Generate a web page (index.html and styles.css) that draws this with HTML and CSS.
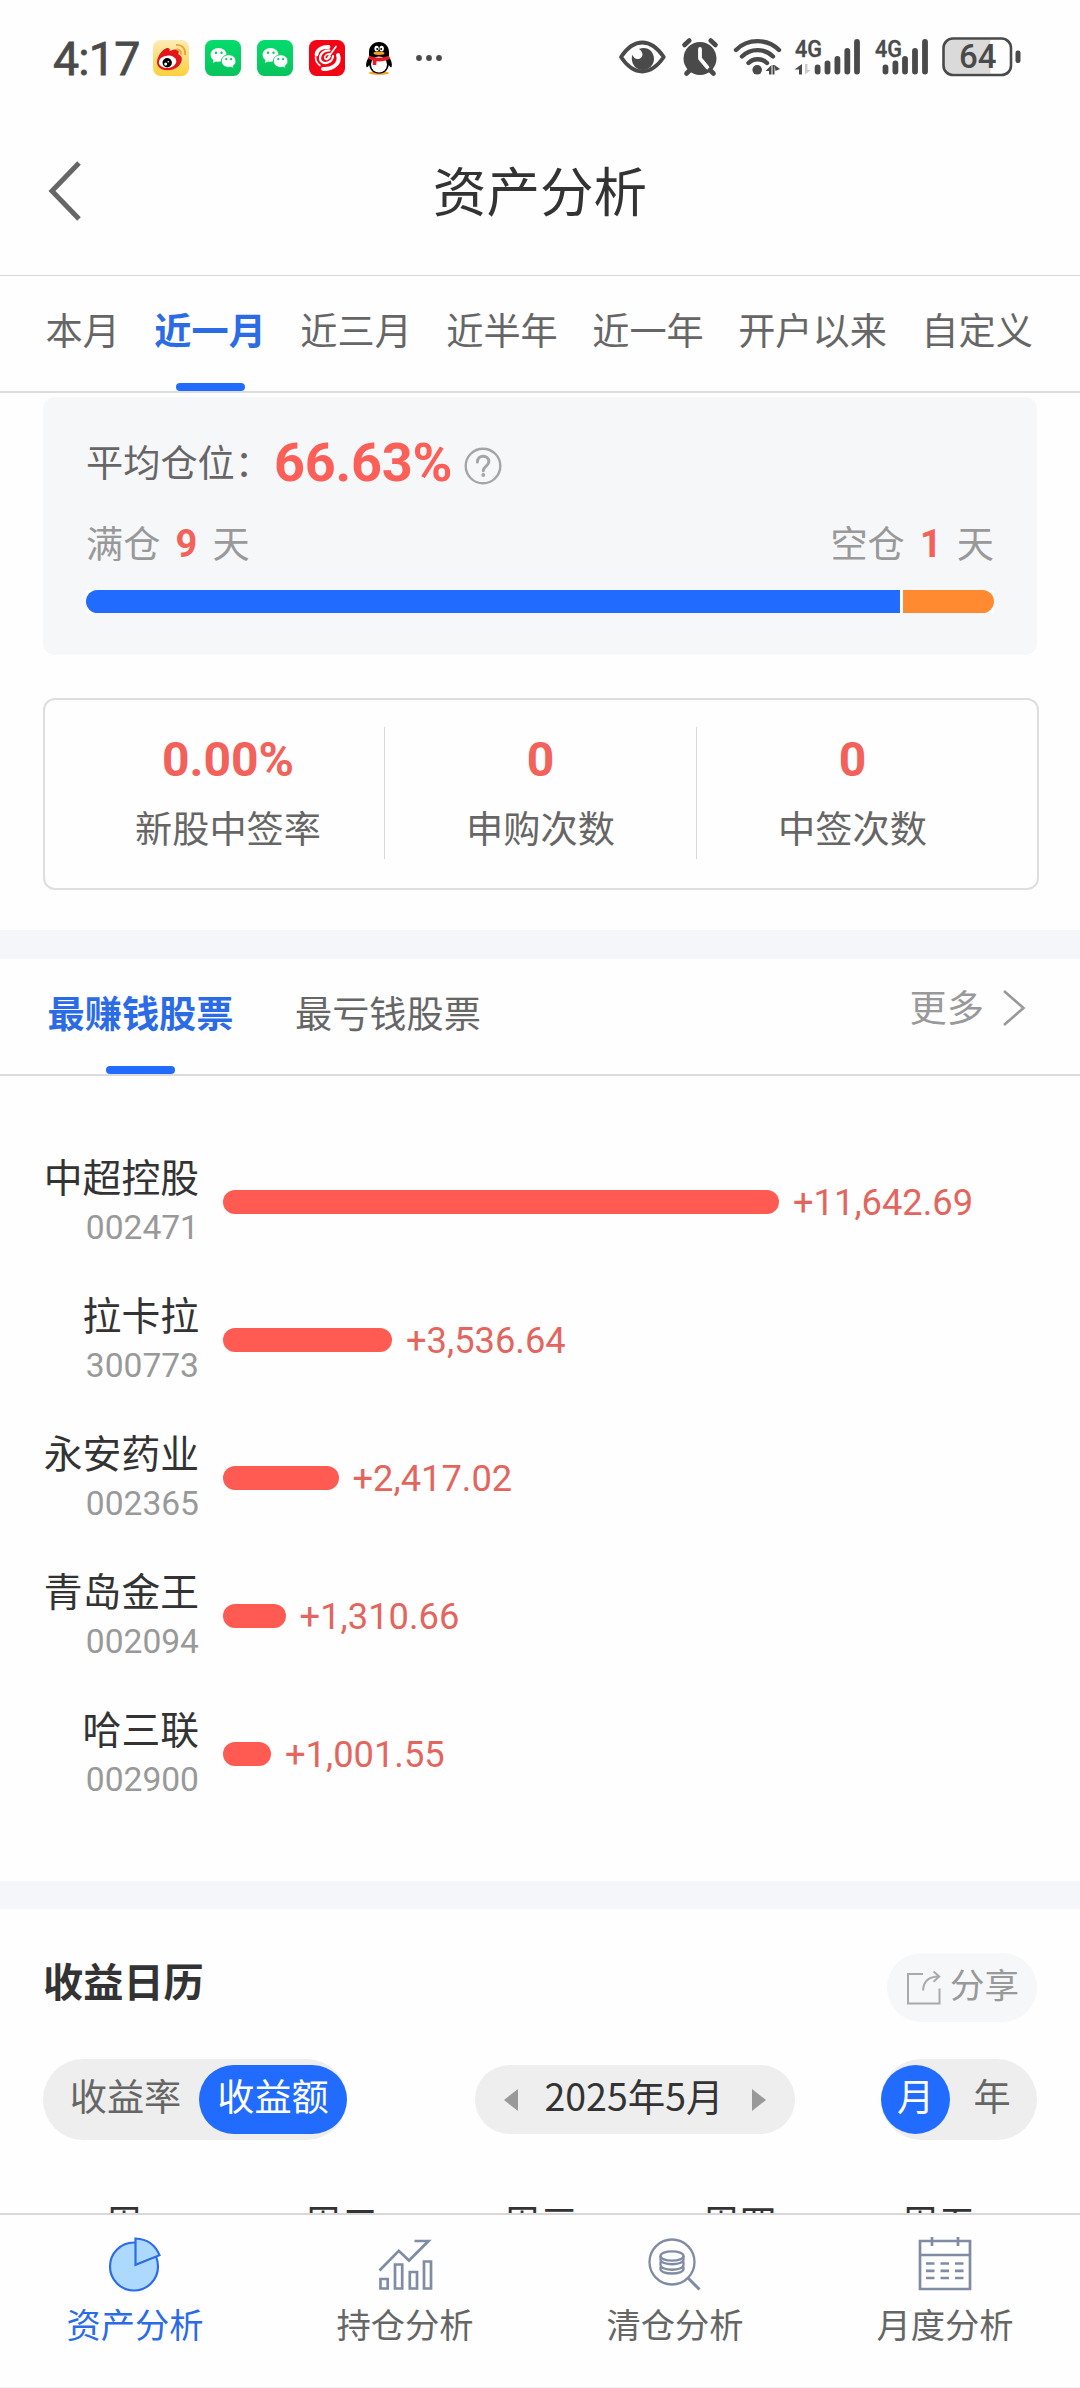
FILE: index.html
```html
<!DOCTYPE html>
<html lang="zh-CN">
<head>
<meta charset="utf-8">
<title>资产分析</title>
<link rel="stylesheet" href="styles.css">
</head>
<body>
<svg class="defs" width="0" height="0">
  <defs>
    <linearGradient id="weibo-bg" x1="0" y1="0" x2="0" y2="1"><stop offset="0" stop-color="#fdebb8"/><stop offset="1" stop-color="#fdd03c"/></linearGradient>
    <linearGradient id="wechat-bg" x1="0" y1="0" x2="0" y2="1"><stop offset="0" stop-color="#04dc6c"/><stop offset="1" stop-color="#09c35c"/></linearGradient>
    <symbol id="wechat" viewBox="0 0 36 36">
      <rect width="36" height="36" rx="7.500" fill="url(#wechat-bg)"/>
      <path d="M13.600 8C9 8 5.600 11 5.600 14.800c0 2.200 1.100 4 2.900 5.200L7.900 23l3.100-1.600c.8.200 1.700.3 2.600.3 4.600 0 7.900-3.200 7.900-6.900C21.500 11 18.200 8 13.600 8z" fill="#fff"/>
      <path d="M23.700 14.800c-4.200 0-7.300 2.800-7.300 6.300s3.100 6.300 7.300 6.300c.8 0 1.500-.1 2.200-.3l2.700 1.400-.5-2.400c1.700-1.100 2.800-2.900 2.800-5C30.900 17.600 27.900 14.800 23.700 14.800z" fill="#fff" stroke="#08cc62" stroke-width=".9"/>
      <g fill="#08cc62"><circle cx="11" cy="12.800" r="1.200"/><circle cx="16.500" cy="12.800" r="1.200"/><circle cx="21.300" cy="19.200" r="1.100"/><circle cx="26.100" cy="19.200" r="1.100"/></g>
    </symbol>
  </defs>
</svg>
<div class="screen">
  <header class="status">
    <div class="status-left">
      <span class="clock">4:17</span>
      <svg width="36" height="36" viewBox="0 0 36 36">
        <rect width="36" height="36" rx="7.500" fill="url(#weibo-bg)"/>
        <path d="M14 8c2.500-.5 3.200 1.200 2.600 3.200 3.400-1.600 6.200-2.400 8.200-1 1.400 1 .9 2.600.5 4 2 .8 3.700 2.500 3.500 5.200-.4 6-7 10.800-14.300 10.800C8.500 30.200 4 27 4 22.200 4 16.500 9.500 9 14 8z" fill="#e1151b"/>
        <ellipse cx="14.600" cy="21.800" rx="8.800" ry="6.200" fill="#fff" transform="rotate(-6 14.600 21.800)"/>
        <circle cx="14.200" cy="22.800" r="4.700"/><circle cx="12.700" cy="24" r="1.500" fill="#fff"/><circle cx="15.300" cy="21.800" r=".8" fill="#fff"/>
        <path d="M23 5c6-.7 10 4 9 10M23.500 9.500c3-.2 5 1.700 4.500 5" fill="none" stroke="#f0a430" stroke-width="1.900"/>
      </svg>
      <svg width="36" height="36"><use href="#wechat"/></svg>
      <svg width="36" height="36"><use href="#wechat"/></svg>
      <svg width="36" height="36" viewBox="0 0 36 36">
        <rect width="36" height="36" rx="7.500" fill="#f40516"/>
        <g fill="none" stroke="#fff" stroke-linecap="round">
          <path d="M7.500 14.500C8 9.500 13 6.800 19.500 7" stroke-width="3.800"/>
          <path d="M6.500 17c0 4 1.500 6.500 4.500 8.500" stroke-width="1.600"/>
          <path d="M29 15c1.500 4 .5 8-3.500 11-3 2.300-7 3.300-11.500 3" stroke-width="4"/>
          <path d="M20.500 10.500c-5-.5-9.500 3-9.500 7.500 0 4 3.800 6 8 4.500 3-1 5-4 5-6.500" stroke-width="2.200"/>
          <path d="M27 6.500 18 19M20.500 13.800c-3 0-5.500 2.400-4.700 4.400.8 2 4 1 5.200-1.700" stroke-width="1.700"/>
        </g>
      </svg>
      <svg width="36" height="36" viewBox="0 0 36 36">
        <ellipse cx="18" cy="33" rx="10" ry="1.700" fill="#f5a51c"/>
        <path d="M18 2c-6 0-10 4.500-10 10v5c-2 3-3.600 6.500-2.600 10 .8 1 2-.5 2.800-2C9 31 13 33.500 18 33.500S27 31 27.800 25c.8 1.500 2 3 2.800 2 1-3.500-.6-7-2.600-10v-5C28 6.500 24 2 18 2z"/>
        <ellipse cx="18" cy="24.500" rx="8" ry="8" fill="#fff"/>
        <path d="M8 15.500c6 3 14 3 20 0l.8 3.300c-4 2.200-9 3-13.300 2.500L15.300 25H11.800v-4.600L7.300 18.800z" fill="#e81a26"/>
        <ellipse cx="15.600" cy="8.600" rx="2.200" ry="2.900" fill="#fff"/><ellipse cx="20.700" cy="8.600" rx="2.200" ry="2.900" fill="#fff"/><circle cx="16.200" cy="9" r="1"/><circle cx="20.200" cy="9" r="1"/>
        <ellipse cx="18" cy="13.300" rx="5.500" ry="1.700" fill="#f5a51c"/>
      </svg>
      <svg class="dots" width="26" height="8" viewBox="0 0 26 8" fill="#4a4a4a"><circle cx="3" cy="4" r="2.900"/><circle cx="13" cy="4" r="2.900"/><circle cx="23" cy="4" r="2.900"/></svg>
    </div>
    <svg class="status-right" width="404" height="42" viewBox="0 0 404 42" fill="#4a4a4a">
      <path d="M3 22C9 13 16 7.500 24.300 7.500S39.600 13 45.800 22C39.600 31 32.600 36.500 24.300 36.500S9 31 3 22z" fill="none" stroke="#4a4a4a" stroke-width="3.800" stroke-linejoin="round"/>
      <path d="M21 14c8-3 15 2 15 10 0 6-5.200 11-11.200 11S14.200 30.500 13.800 24c-.1-1.500.2-3 .7-4.200 1 3.500 4 5 7 4 4-1.300 4.200-7-.5-9.800z"/>
      <g>
        <circle cx="82" cy="23.500" r="16.500"/>
        <path d="M82 14v9.500l7.500 9" fill="none" stroke="#fff" stroke-width="3.800" stroke-linecap="round" stroke-linejoin="round"/>
        <path d="M66.500 10l4.800-4.500M97.500 10l-4.800-4.500M72 35l-3.500 3.500M92 35l3.500 3.500" stroke="#4a4a4a" stroke-width="4.600" stroke-linecap="round"/>
      </g>
      <g fill="none" stroke="#4a4a4a" stroke-width="4.400" stroke-linecap="round">
        <path d="M118 15c11.500-11.800 31.500-11.800 43 0M124 21.500c8.500-8.500 22.500-8.500 31 0M130.500 28c5-5 13.500-5 18.500 0"/>
      </g>
      <circle cx="139.200" cy="34.800" r="4.800"/><path d="M153.500 30v9.500H151v-3.500h-3.500zM156.500 30v9.500h-2V30zl5.500 4-4.500 2z"/>
      <text x="177" y="21.500" class="net" textLength="27" lengthAdjust="spacingAndGlyphs">4G</text>
      <path d="M184 29v10.500h-3v-5h-4.500z"/><path d="M187 29h2.500v6h3.500l-6 4.500z" fill="#ccc"/>
      <g stroke="#4a4a4a" stroke-width="5.800" stroke-linecap="round"><path d="M199.600 32.500v4M209.500 28.500v8M219.400 24v12.500M229.300 16v20.500M239 7v29.500M267.500 32.500v4M277.400 28.500v8M287 24v12.500M297 16v20.500M307 7v29.500"/></g>
      <text x="257" y="21.500" class="net" textLength="27" lengthAdjust="spacingAndGlyphs">4G</text>
      <path d="M335 4.500h37.500v34H335c-6 0-9-3-9-9v-16c0-6 3-9 9-9z" fill="#dadada"/>
      <rect x="325.500" y="3.500" width="67.500" height="36.500" rx="9.500" fill="none" stroke="#4a4a4a" stroke-width="2.600"/>
      <rect x="397.500" y="15.500" width="5" height="12.500" rx="2.200"/>
      <text x="341" y="33.200" class="battery" textLength="37.500" lengthAdjust="spacingAndGlyphs">64</text>
    </svg>
  </header>

  <div class="title-bar">
    <svg width="36" height="62" viewBox="0 0 36 62"><path d="M33 3 6 31l27 28" fill="none" stroke="#666" stroke-width="5"/></svg>
    <h1>资产分析</h1>
  </div>

  <nav class="tabs">
    <span>本月</span><span class="on">近一月</span><span>近三月</span><span>近半年</span><span>近一年</span><span>开户以来</span><span>自定义</span>
  </nav>

  <main class="content">
    <section class="position">
      <div class="avg"><span>平均仓位：</span><b class="num">66.63%</b>
        <svg width="38" height="38" viewBox="0 0 38 38" fill="none" stroke="#a4a5a6" stroke-width="2.400"><circle cx="19" cy="19" r="17.300"/><path d="M13.400 15c0-7.600 11.500-7.600 11.500-.4 0 4.600-5.600 4.500-5.600 9.200" stroke-width="3" stroke-linecap="round"/><circle cx="19.300" cy="28" r="1.900" fill="#a4a5a6" stroke="none"/></svg>
      </div>
      <div class="days"><p>满仓<b class="num">9</b>天</p><p>空仓<b class="num">1</b>天</p></div>
      <div class="split"><i class="full"></i><i class="empty"></i></div>
    </section>

    <section class="stats">
      <div><b class="num">0.00%</b><span>新股中签率</span></div>
      <div><b class="num">0</b><span>申购次数</span></div>
      <div><b class="num">0</b><span>中签次数</span></div>
    </section>

    <div class="band"></div>

    <div class="rank-tabs">
      <span class="on">最赚钱股票</span><span>最亏钱股票</span>
      <a class="more">更多<svg width="24" height="38" viewBox="0 0 24 38"><path d="M2 2l19.500 17L2 36" fill="none" stroke="#999" stroke-width="2.600"/></svg></a>
    </div>

    <section class="rank">
      <div class="stock"><div class="who"><span>中超控股</span><em class="num">002471</em></div><i style="width:556px"></i><strong class="num">+11,642.69</strong></div>
      <div class="stock"><div class="who"><span>拉卡拉</span><em class="num">300773</em></div><i style="width:169px"></i><strong class="num">+3,536.64</strong></div>
      <div class="stock"><div class="who"><span>永安药业</span><em class="num">002365</em></div><i style="width:115.500px"></i><strong class="num">+2,417.02</strong></div>
      <div class="stock"><div class="who"><span>青岛金王</span><em class="num">002094</em></div><i style="width:62.600px"></i><strong class="num">+1,310.66</strong></div>
      <div class="stock"><div class="who"><span>哈三联</span><em class="num">002900</em></div><i style="width:48px"></i><strong class="num">+1,001.55</strong></div>
    </section>

    <div class="band low"></div>

    <section class="calendar">
      <div class="cal-head"><h2>收益日历</h2>
        <a class="share"><svg width="36" height="36" viewBox="0 0 36 36" fill="none" stroke="#aaa" stroke-width="2"><path d="M17 4H2v29.500h31.500V18.500"/><path d="M17 20.500C17.500 11.500 22 6.500 33 6.500M27.500 1.500l5.800 5-5.800 5.300"/></svg><span>分享</span></a>
      </div>
      <div class="cal-ctrl">
        <div class="seg rate"><span>收益率</span><span class="on">收益额</span></div>
        <div class="date"><svg width="14" height="22" viewBox="0 0 14 22"><path d="M14 0v22L0 11z" fill="#999"/></svg><span>2025年5月</span><svg width="14" height="22" viewBox="0 0 14 22"><path d="M0 0v22l14-11z" fill="#999"/></svg></div>
        <div class="seg unit"><span class="on">月</span><span>年</span></div>
      </div>
      <div class="week"><span>周一</span><span>周二</span><span>周三</span><span>周四</span><span>周五</span></div>
    </section>
  </main>

  <footer class="bottom">
    <a class="on"><svg width="56" height="56" viewBox="0 0 56 56" fill="#aed9ff" stroke="#2c6ce6" stroke-width="2.200"><circle cx="27" cy="30.500" r="24"/><path d="M28.500 2.500v26.300l24-9.600C48.500 9.500 40 3 28.500 2.500z"/></svg><span>资产分析</span></a>
    <a><svg width="56" height="56" viewBox="0 0 56 56" fill="none" stroke="#7f8ca3" stroke-width="2.700"><path d="M2.500 34.500 21.800 14.800 32 24.500 51.500 5H37.500"/><path d="M3.500 43h7.200v9.500H3.500zM18 28.500h7.200v24H18zM32.800 36H40v16.500h-7.200zM47 25.500h7v27h-7z"/></svg><span>持仓分析</span></a>
    <a><svg width="56" height="56" viewBox="0 0 56 56" fill="none" stroke="#7f8ca3" stroke-width="2.300"><circle cx="25" cy="26" r="22.500"/><path d="M41 42l11.500 11.500" stroke-width="3"/><ellipse cx="25" cy="20" rx="11.500" ry="4.700"/><path d="M13.500 20v3.500c0 6.300 23 6.300 23 0V20M13.500 25.500v3.500c0 6.300 23 6.300 23 0v-3.500M13.500 31v2c0 6 23 6 23 0v-2"/></svg><span>清仓分析</span></a>
    <a><svg width="56" height="56" viewBox="0 0 56 56" fill="none" stroke="#7f8ca3" stroke-width="2.700"><path d="M3 5h50v48H3zM3 19h50M15 1v9M41 1v9M9 27.500h8.500M23.500 27.500H32M38 27.500h8.500M9 34.800h8.500M23.500 34.800H32M38 34.800h8.500M9 42h8.500M23.500 42H32M38 42h8.500"/></svg><span>月度分析</span></a>
  </footer>
</div>
</body>
</html>
```

FILE: styles.css
```css
* { box-sizing: border-box; margin: 0; padding: 0; }
body { background: #fefefe; font-family: "Noto Sans CJK SC", sans-serif; color: #666; font-size: 37.200px; line-height: 44px; }
.defs { display: block; height: 0; }
svg { display: block; flex: none; }
.num { font-family: Roboto, "Noto Sans CJK SC", sans-serif; font-style: normal; }
.screen { width: 1080px; height: 2388px; display: flex; flex-direction: column; overflow: hidden; }

.status { height: 116px; flex: none; display: flex; justify-content: space-between; padding: 0 58px 0 53px; }
.status-left { display: flex; align-items: center; height: 36px; margin-top: 40px; gap: 16px; }
.clock { font: 400 46.500px/46px Roboto, sans-serif; letter-spacing: -.8px; color: #4a4a4a; width: 84px; white-space: nowrap; padding-top: 2px; -webkit-text-stroke: .8px #4a4a4a; }
.dots { margin-left: 3px; }
.status-right { margin-top: 35px; }
.net { font: 500 24px Roboto, sans-serif; stroke: #4a4a4a; stroke-width: .4px; }
.battery { font: 500 33px Roboto, sans-serif; }

.title-bar { height: 160px; flex: none; display: grid; grid-template-columns: 36px 1fr 36px; align-items: center; padding: 0 46px 10px; border-bottom: 1px solid #d8d8d8; }
.title-bar h1 { font-size: 53.600px; line-height: 60px; font-weight: 400; color: #333; text-align: center; padding-bottom: 3px; }

.tabs { height: 117px; flex: none; display: flex; gap: 34.400px; padding: 31px 0 0 45.500px; border-bottom: 2px solid #dcdcdc; white-space: nowrap; }
.on { position: relative; }
.tabs .on, .rank-tabs .on { color: #2b6ce6; font-weight: 700; }
.tabs .on::after, .rank-tabs .on::after { content: ""; position: absolute; left: 50%; bottom: 0; width: 69px; height: 8px; margin-left: -34px; border-radius: 4px; background: #216bff; }

.content { flex: 1; min-height: 0; overflow: hidden; padding-top: 4px; }
.position { margin: 0 43px; height: 258px; padding: 39px 43px 0; border-radius: 12px; background: #f6f7f9; }
.avg { display: flex; align-items: center; height: 54px; }
.avg > span { width: 188px; white-space: nowrap; padding-bottom: 4px; }
.avg .num { font-size: 54px; letter-spacing: -.2px; width: 178px; color: #fb5f58; }
.avg svg { margin: 6px 0 0 12px; }
.days { display: flex; justify-content: space-between; margin-top: 30px; color: #999; }
.days p { display: flex; }
.days b { width: 52px; text-align: center; font-size: 38px; color: #f2625b; padding-top: 2px; }
.split { display: flex; gap: 3px; height: 23px; margin-top: 24px; background: #fff; }
.full { width: 814px; background: #216bff; border-radius: 12px 0 0 12px; }
.empty { flex: 1; background: #ff8a30; border-radius: 0 12px 12px 0; }

.stats { margin: 43px 41px 0 43px; height: 192px; border: 2px solid #dedede; border-radius: 12px; display: grid; grid-template-columns: 312px 312px 312px; padding: 27px 0 0 27px; }
.stats div { height: 132px; padding-top: 8px; display: flex; flex-direction: column; align-items: center; gap: 20px; border-left: 1.500px solid #d8d8d8; }
.stats div:first-child { border-left: 0; }
.stats b { font-size: 48px; line-height: 50px; color: #f2625b; }

.band { height: 29px; background: #f5f6f9; margin-top: 40px; }
.rank-tabs { height: 117px; display: flex; gap: 61.500px; padding: 31px 54px 0 47.500px; border-bottom: 2px solid #dcdcdc; }
.more { margin-left: auto; display: flex; gap: 18px; color: #999; margin-top: -6px; height: 44px; align-items: center; }
.more svg { margin-top: 4px; }

.rank { padding-top: 77px; height: 805px; }
.stock { height: 138px; display: flex; align-items: flex-start; }
.who { width: 199px; margin-right: 24px; text-align: right; display: flex; flex-direction: column; gap: 11px; }
.who span { font-size: 38.800px; line-height: 44px; color: #333; }
.who em { font-size: 33.600px; line-height: 40px; color: #999; }
.stock i { height: 24px; margin-top: 37px; border-radius: 12px; background: #ff5b52; }
.stock strong { margin: 28px 0 0 14px; font-size: 36.300px; line-height: 44px; font-weight: 400; color: #e2665e; }

.band.low { margin-top: 0; height: 28px; }
.calendar { padding: 44px 43px 0; }
.cal-head { display: flex; justify-content: space-between; }
.cal-head h2 { font-size: 40.200px; line-height: 54px; font-weight: 700; color: #333; }
.share { width: 150px; height: 69px; border-radius: 35px; background: #f6f7f9; color: #999; font-size: 34.500px; display: flex; align-items: center; padding: 0 0 6px 19px; gap: 8px; }
.share svg { margin-top: 6px; }
.share span { padding-bottom: 4px; }
.cal-ctrl { display: flex; justify-content: space-between; align-items: center; margin-top: 37px; height: 81px; }
.seg { height: 81px; border-radius: 41px; background: #eee; display: flex; align-items: center; }
.seg span { height: 69px; line-height: 61px; text-align: center; }
.seg .on { background: #216bff; color: #fff; border-radius: 35px; }
.rate { width: 304px; }
.rate span { width: 148px; }
.rate span:first-child { width: 156px; padding-left: 9px; }
.unit { width: 156px; }
.unit span { width: 69px; }
.unit span:last-child { width: 87px; padding-right: 3px; }
.date { width: 320px; height: 69px; margin-left: 42px; border-radius: 35px; background: #eee; color: #333; display: flex; align-items: center; justify-content: space-between; padding: 0 29px; }
.date span { padding: 0 2px 10px 0; font-size: 37.500px; }
.week { display: grid; grid-template-columns: repeat(5, 199px); margin-top: 56px; color: #333; text-align: center; line-height: 50px; font-size: 37.300px; }

.bottom { height: 175px; flex: none; display: grid; grid-template-columns: repeat(4, 270px); border-top: 2px solid #d8d8d8; border-bottom: 1px solid #f3f3f3; background: #fefefe; }
.bottom a { display: flex; flex-direction: column; align-items: center; padding-top: 21px; gap: 7px; font-size: 34.300px; line-height: 48px; }
.bottom .on { color: #2b6ce6; }
```
